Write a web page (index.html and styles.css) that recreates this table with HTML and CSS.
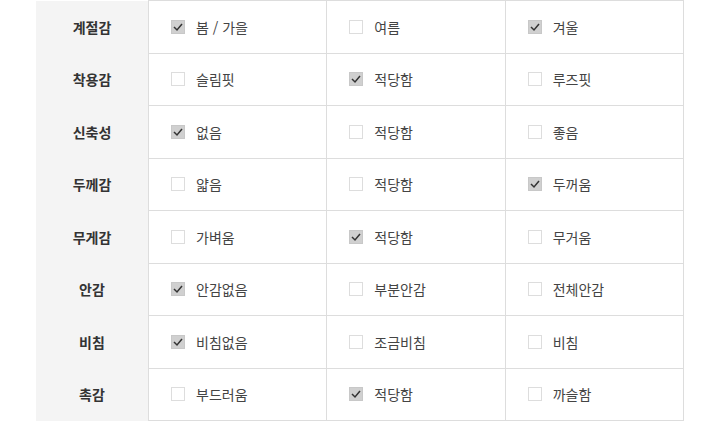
FILE: index.html
```html
<!DOCTYPE html>
<html lang="ko">
<head>
<meta charset="utf-8">
<link rel="stylesheet" href="styles.css">
</head>
<body>
<table class="spec">
  <tbody>
    <tr>
      <th>계절감</th>
      <td><span class="opt"><span class="box on"><svg viewBox="0 0 14 14"><polyline points="3,7 6,10 11,4"/></svg></span>봄 / 가을</span></td>
      <td><span class="opt"><span class="box"></span>여름</span></td>
      <td><span class="opt"><span class="box on"><svg viewBox="0 0 14 14"><polyline points="3,7 6,10 11,4"/></svg></span>겨울</span></td>
    </tr>
    <tr>
      <th>착용감</th>
      <td><span class="opt"><span class="box"></span>슬림핏</span></td>
      <td><span class="opt"><span class="box on"><svg viewBox="0 0 14 14"><polyline points="3,7 6,10 11,4"/></svg></span>적당함</span></td>
      <td><span class="opt"><span class="box"></span>루즈핏</span></td>
    </tr>
    <tr>
      <th>신축성</th>
      <td><span class="opt"><span class="box on"><svg viewBox="0 0 14 14"><polyline points="3,7 6,10 11,4"/></svg></span>없음</span></td>
      <td><span class="opt"><span class="box"></span>적당함</span></td>
      <td><span class="opt"><span class="box"></span>좋음</span></td>
    </tr>
    <tr>
      <th>두께감</th>
      <td><span class="opt"><span class="box"></span>얇음</span></td>
      <td><span class="opt"><span class="box"></span>적당함</span></td>
      <td><span class="opt"><span class="box on"><svg viewBox="0 0 14 14"><polyline points="3,7 6,10 11,4"/></svg></span>두꺼움</span></td>
    </tr>
    <tr>
      <th>무게감</th>
      <td><span class="opt"><span class="box"></span>가벼움</span></td>
      <td><span class="opt"><span class="box on"><svg viewBox="0 0 14 14"><polyline points="3,7 6,10 11,4"/></svg></span>적당함</span></td>
      <td><span class="opt"><span class="box"></span>무거움</span></td>
    </tr>
    <tr>
      <th>안감</th>
      <td><span class="opt"><span class="box on"><svg viewBox="0 0 14 14"><polyline points="3,7 6,10 11,4"/></svg></span>안감없음</span></td>
      <td><span class="opt"><span class="box"></span>부분안감</span></td>
      <td><span class="opt"><span class="box"></span>전체안감</span></td>
    </tr>
    <tr>
      <th>비침</th>
      <td><span class="opt"><span class="box on"><svg viewBox="0 0 14 14"><polyline points="3,7 6,10 11,4"/></svg></span>비침없음</span></td>
      <td><span class="opt"><span class="box"></span>조금비침</span></td>
      <td><span class="opt"><span class="box"></span>비침</span></td>
    </tr>
    <tr>
      <th>촉감</th>
      <td><span class="opt"><span class="box"></span>부드러움</span></td>
      <td><span class="opt"><span class="box on"><svg viewBox="0 0 14 14"><polyline points="3,7 6,10 11,4"/></svg></span>적당함</span></td>
      <td><span class="opt"><span class="box"></span>까슬함</span></td>
    </tr>
  </tbody>
</table>
</body>
</html>
```
FILE: styles.css
```css
html, body {
  margin: 0;
  padding: 0;
  background: #ffffff;
}
body {
  font-family: "Noto Sans CJK KR", "Noto Sans", sans-serif;
  font-size: 14px;
  color: #444;
}
.spec {
  margin-left: 36px;
  border-collapse: collapse;
  table-layout: fixed;
  width: 648px;
}
.spec th {
  width: 112px;
  height: 51.5px;
  padding: 0;
  background: #f4f4f4;
  color: #333;
  font-weight: 700;
  font-size: 14px;
  text-align: center;
  vertical-align: middle;
  border: none;
}
.spec td {
  height: 51.5px;
  padding: 0 0 0 22px;
  border: 1px solid #dddddd;
  vertical-align: middle;
}
.opt {
  display: flex;
  align-items: center;
  gap: 11px;
  line-height: 20px;
}
.box {
  flex: none;
  width: 14px;
  height: 14px;
  box-sizing: border-box;
  border: 1px solid #dddddd;
  background: #ffffff;
  display: flex;
  align-items: center;
  justify-content: center;
}
.box.on {
  background: #d0d0d0;
  border-color: #c8c8c8;
}
.box svg {
  width: 14px;
  height: 14px;
  flex: none;
}
.box polyline {
  fill: none;
  stroke: #333;
  stroke-width: 1.5;
}
```
